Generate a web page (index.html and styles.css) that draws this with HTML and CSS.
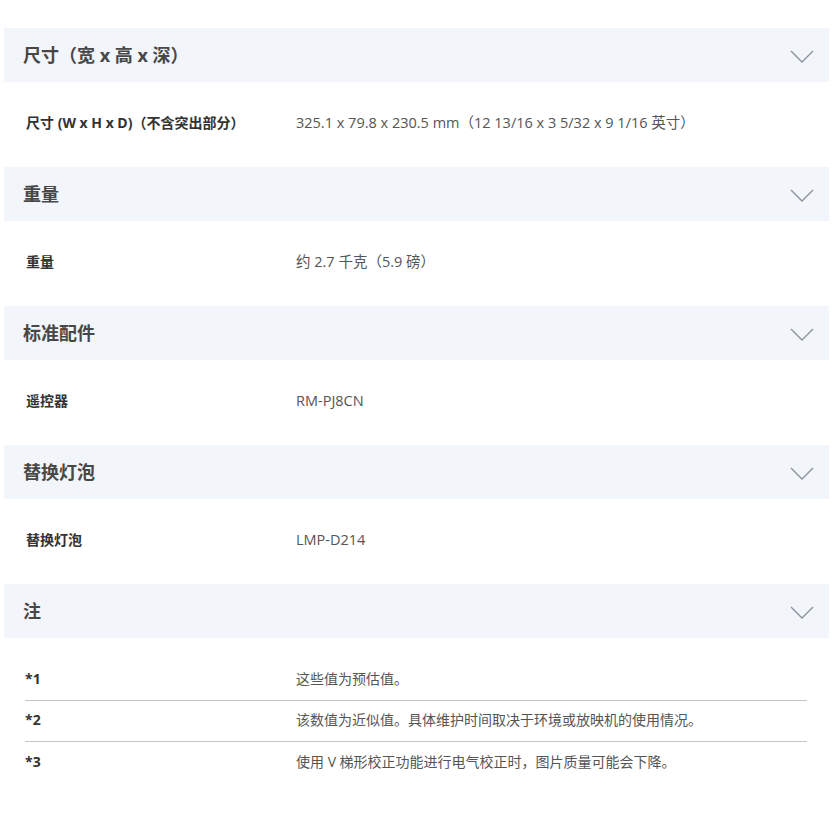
FILE: index.html
```html
<!DOCTYPE html>
<html lang="zh-CN">
<head>
  <meta charset="UTF-8" />
  <meta name="viewport" content="width=device-width, initial-scale=1" />
  <title>规格</title>
  <link rel="stylesheet" href="styles.css">
</head>
<body>
  <div class="spec-page">
    <section class="spec-group">
      <div class="spec-head">
        <h2>尺寸（宽 x 高 x 深）</h2>
        <svg class="chevron" viewBox="0 0 24 14"><path d="M1 1 L12 12 L23 1" /></svg>
      </div>
      <div class="spec-row">
        <div class="spec-label">尺寸 (W x H x D)（不含突出部分）</div>
        <div class="spec-value">325.1 x 79.8 x 230.5 mm（12 13/16 x 3 5/32 x 9 1/16 英寸）</div>
      </div>
    </section>

    <section class="spec-group">
      <div class="spec-head">
        <h2>重量</h2>
        <svg class="chevron" viewBox="0 0 24 14"><path d="M1 1 L12 12 L23 1" /></svg>
      </div>
      <div class="spec-row">
        <div class="spec-label">重量</div>
        <div class="spec-value">约 2.7 千克（5.9 磅）</div>
      </div>
    </section>

    <section class="spec-group">
      <div class="spec-head">
        <h2>标准配件</h2>
        <svg class="chevron" viewBox="0 0 24 14"><path d="M1 1 L12 12 L23 1" /></svg>
      </div>
      <div class="spec-row">
        <div class="spec-label">遥控器</div>
        <div class="spec-value">RM-PJ8CN</div>
      </div>
    </section>

    <section class="spec-group">
      <div class="spec-head">
        <h2>替换灯泡</h2>
        <svg class="chevron" viewBox="0 0 24 14"><path d="M1 1 L12 12 L23 1" /></svg>
      </div>
      <div class="spec-row">
        <div class="spec-label">替换灯泡</div>
        <div class="spec-value">LMP-D214</div>
      </div>
    </section>

    <section class="spec-group">
      <div class="spec-head">
        <h2>注</h2>
        <svg class="chevron" viewBox="0 0 24 14"><path d="M1 1 L12 12 L23 1" /></svg>
      </div>
      <div class="notes">
        <div class="note-row">
          <div class="note-mark">*1</div>
          <div class="note-text">这些值为预估值。</div>
        </div>
        <div class="note-row">
          <div class="note-mark">*2</div>
          <div class="note-text">该数值为近似值。具体维护时间取决于环境或放映机的使用情况。</div>
        </div>
        <div class="note-row">
          <div class="note-mark">*3</div>
          <div class="note-text">使用 V 梯形校正功能进行电气校正时，图片质量可能会下降。</div>
        </div>
      </div>
    </section>
  </div>
</body>
</html>
```

FILE: styles.css
```css
* {
  box-sizing: border-box;
  margin: 0;
  padding: 0;
}

body {
  font-family: "Open Sans", "Noto Sans CJK SC", sans-serif;
  background: #fff;
  color: #333;
}

.spec-page {
  padding: 28px 5px 0 4px;
}

.spec-head {
  display: flex;
  align-items: center;
  justify-content: space-between;
  height: 54px;
  padding: 0 15px 0 19px;
  background: #f2f5fa;
}

.spec-head h2 {
  font-size: 18px;
  font-weight: 700;
  color: #474747;
  line-height: 24px;
}

.chevron {
  width: 24px;
  height: 14px;
  margin-top: 4px;
  fill: none;
  stroke: #8a939d;
  stroke-width: 1.4;
}

.spec-row {
  display: flex;
  align-items: center;
  height: 85px;
  padding: 0 0 3px 22px;
  line-height: 20px;
}

.spec-label {
  width: 270px;
  flex-shrink: 0;
  font-size: 14px;
  font-weight: 700;
  color: #333;
}

.spec-value {
  font-size: 14.5px;
  color: #555;
}

.notes {
  padding: 22px 22px 0 21px;
}

.note-row {
  display: flex;
  align-items: center;
  height: 41px;
  padding-bottom: 2px;
  border-bottom: 1px solid #c4c4c4;
  line-height: 20px;
}

.note-row:last-child {
  border-bottom: none;
}

.note-mark {
  width: 271px;
  flex-shrink: 0;
  font-size: 14px;
  font-weight: 700;
  color: #333;
}

.note-text {
  font-size: 14px;
  color: #555;
}
```
